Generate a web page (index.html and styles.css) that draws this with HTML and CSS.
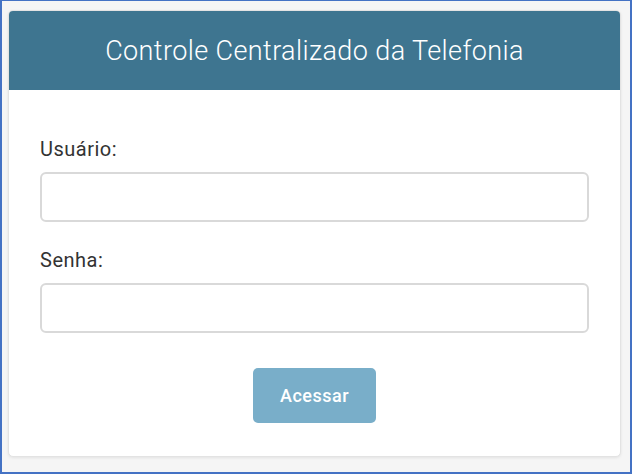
FILE: index.html
```html
<!DOCTYPE html>
<html lang="pt">
<head>
    <meta charset="UTF-8" />
    <meta name="viewport" content="width=device-width, initial-scale=1.0" />
    <title>Controle Centralizado da Telefonia</title>
    <link rel="stylesheet" href="styles.css">
</head>
<body>
    <div class="frame">
        <div class="login-card">
            <div class="card-header">
                <h1>Controle Centralizado da Telefonia</h1>
            </div>
            <form id="loginForm" class="card-body">
                <div class="form-group">
                    <label for="usuario">Usuário:</label>
                    <input type="text" id="usuario" name="usuario">
                </div>
                <div class="form-group">
                    <label for="senha">Senha:</label>
                    <input type="password" id="senha" name="senha">
                </div>
                <div class="actions">
                    <button type="submit" class="btn-acessar" disabled>Acessar</button>
                </div>
            </form>
        </div>
    </div>
</body>
</html>
```

FILE: styles.css
```css
html, body {
    margin: 0;
    height: 100%;
}
body {
    font-family: Roboto, "Noto Sans", sans-serif;
    color: #333;
}
.frame {
    box-sizing: border-box;
    height: 474px;
    border: 2px solid #4472c4;
    border-top-width: 1px;
    background: #f5f5f5;
    padding: 9px 9px 15px 6px;
}
.login-card {
    box-sizing: border-box;
    height: 447px;
    background: #fff;
    border: 1px solid #e3e3e3;
    border-radius: 5px;
    box-shadow: 0 1px 3px rgba(0, 0, 0, 0.08);
    overflow: hidden;
}
.card-header {
    background: #3e7590;
    height: 79px;
    display: flex;
    align-items: center;
    justify-content: center;
}
.card-header h1 {
    margin: 0;
    font-size: 27px;
    font-weight: 300;
    letter-spacing: 0.4px;
    color: #fff;
}
.card-body {
    padding: 48px 31px 0 31px;
}
.form-group {
    margin-bottom: 27px;
}
label {
    display: block;
    font-size: 20px;
    line-height: 22px;
    letter-spacing: 0.5px;
    margin-bottom: 12px;
    color: #333;
}
input[type="text"],
input[type="password"] {
    box-sizing: border-box;
    width: 100%;
    height: 50px;
    border: 2px solid #d9d9d9;
    border-radius: 6px;
    font-family: Roboto, sans-serif;
    font-size: 16px;
    padding: 0 12px;
}
.actions {
    display: flex;
    justify-content: center;
    padding-top: 8px;
}
.btn-acessar {
    width: 123px;
    height: 55px;
    background-color: #79aec9;
    color: #fff;
    border: none;
    border-radius: 5px;
    font-family: Roboto, sans-serif;
    font-size: 18px;
    font-weight: 500;
    letter-spacing: 0.5px;
}
```
